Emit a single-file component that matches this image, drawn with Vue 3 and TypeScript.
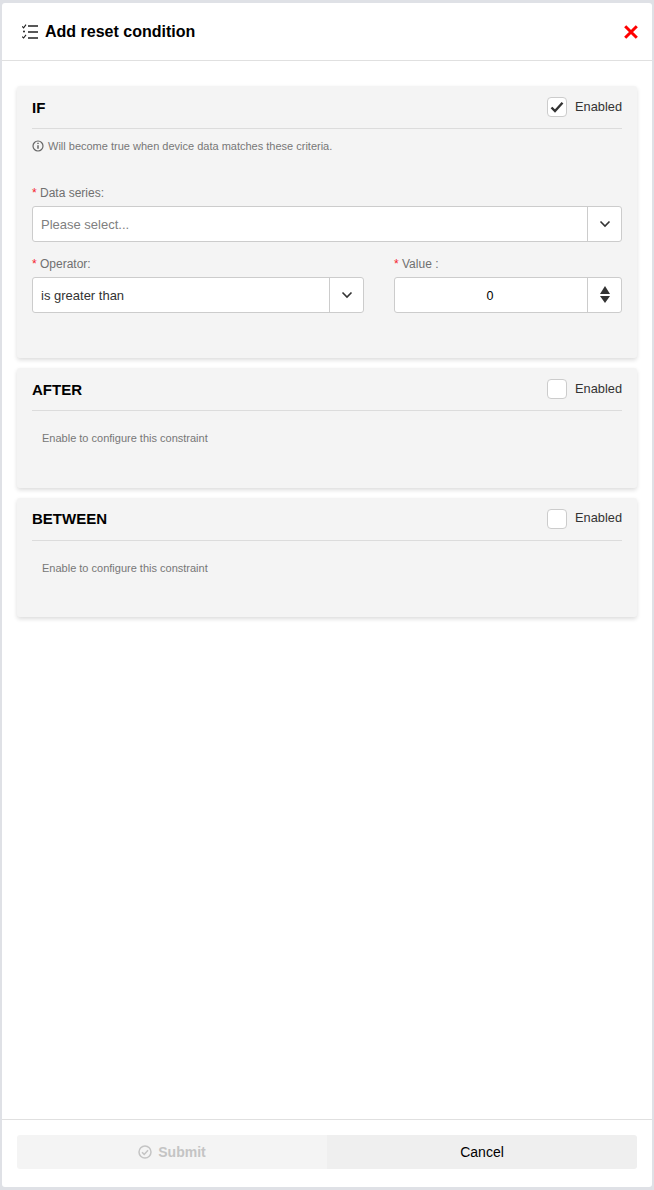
<template>
  <div class="page">
    <div class="dialog">
      <div class="dialog-header">
        <div class="dialog-title">
          <svg class="title-icon" width="18" height="16" viewBox="0 0 18 16" fill="none" stroke="#222">
            <path d="M.2 2.4 1.6 3.8 4 .6" stroke-width="1.1" />
            <path d="M.2 12.6 1.6 14 4 10.8" stroke-width="1.1" />
            <circle cx="2" cy="7.6" r="1" fill="#222" stroke="none" />
            <path d="M6 2h10M6 8h10M6 14h10" stroke-width="1.4" />
          </svg>
          <span>Add reset condition</span>
        </div>
        <svg class="close" width="14" height="14" viewBox="0 0 14 14" fill="none" stroke="#f00" stroke-width="3">
          <path d="M1.2 1.2 12.8 12.8M12.8 1.2 1.2 12.8" />
        </svg>
      </div>

      <div class="dialog-body">
        <section v-for="section in sections" :key="section.title" class="card" :class="{ open: section.enabled }">
          <div class="card-head">
            <h3>{{ section.title }}</h3>
            <label class="enabled">
              <span class="box">
                <svg v-if="section.enabled" width="14" height="12" viewBox="0 0 14 12" fill="none" stroke="#333" stroke-width="2.4">
                  <path d="M1.5 6.5 5 10 12.5 1.8" />
                </svg>
              </span>
              <span class="enabled-text">Enabled</span>
            </label>
          </div>

          <template v-if="section.enabled">
            <p class="hint">
              <svg width="12" height="12" viewBox="0 0 12 12" fill="none" stroke="#666">
                <circle cx="6" cy="6" r="5" stroke-width="1.2" />
                <path d="M6 5.2v3.6" stroke-width="1.5" />
                <path d="M6 2.8v1.3" stroke-width="1.5" />
              </svg>
              Will become true when device data matches these criteria.
            </p>

            <div class="field series">
              <div class="label"><i>*</i> Data series:</div>
              <div class="control">
                <div class="value placeholder">Please select...</div>
                <div class="addon">
                  <svg width="12" height="8" viewBox="0 0 12 8" fill="none" stroke="#333" stroke-width="1.6"><path d="M1.5 1.5 6 6l4.5-4.5" /></svg>
                </div>
              </div>
            </div>

            <div class="row">
              <div class="field operator">
                <div class="label"><i>*</i> Operator:</div>
                <div class="control">
                  <div class="value">is greater than</div>
                  <div class="addon">
                    <svg width="12" height="8" viewBox="0 0 12 8" fill="none" stroke="#333" stroke-width="1.6"><path d="M1.5 1.5 6 6l4.5-4.5" /></svg>
                  </div>
                </div>
              </div>
              <div class="field number">
                <div class="label"><i>*</i> Value :</div>
                <div class="control">
                  <div class="value centered">0</div>
                  <div class="addon spinner">
                    <svg width="12" height="20" viewBox="0 0 12 20" fill="#333"><path d="M6 1 11 9H1zM1 11h10l-5 7z" /></svg>
                  </div>
                </div>
              </div>
            </div>
          </template>

          <p v-else class="disabled-note">Enable to configure this constraint</p>
        </section>
      </div>

      <div class="dialog-footer">
        <button class="btn submit" disabled>
          <svg width="14" height="14" viewBox="0 0 14 14" fill="none" stroke="#c4c4c4" stroke-width="1.5">
            <circle cx="7" cy="7" r="6" />
            <path d="M4 7.2 6.2 9.4 10 5.2" />
          </svg>
          Submit
        </button>
        <button class="btn cancel">Cancel</button>
      </div>
    </div>
  </div>
</template>

<script setup lang="ts">
interface Section {
  title: string;
  enabled: boolean;
}

const sections: Section[] = [
  { title: 'IF', enabled: true },
  { title: 'AFTER', enabled: false },
  { title: 'BETWEEN', enabled: false },
];
</script>

<style scoped>
.page {
  box-sizing: border-box;
  height: 1190px;
  padding: 3px 2px;
  background: #dfe1e6;
  font-family: "Liberation Sans", Arial, sans-serif;
}

.dialog {
  display: flex;
  flex-direction: column;
  height: 100%;
  background: #fff;
  border-radius: 3px;
}

.dialog-header {
  box-sizing: border-box;
  display: flex;
  align-items: center;
  justify-content: space-between;
  height: 58px;
  padding: 0 14px 0 20px;
  border-bottom: 1px solid #e0e0e0;
}

.dialog-title {
  display: flex;
  align-items: center;
  gap: 5px;
  font-size: 16px;
  font-weight: 700;
  color: #000;
}

.dialog-body {
  flex: 1;
  display: flex;
  flex-direction: column;
  gap: 10px;
  padding: 25px 15px 0;
}

.card {
  box-sizing: border-box;
  height: 119.5px;
  padding: 0 15px;
  background: #f4f4f4;
  border-radius: 3px;
  box-shadow: 0 2px 4px rgba(0, 0, 0, 0.14);
}

.card.open {
  height: 272px;
}

.card-head {
  box-sizing: border-box;
  display: flex;
  align-items: center;
  justify-content: space-between;
  height: 43px;
  border-bottom: 1px solid #dcdcdc;
}

.card-head h3 {
  margin: 0;
  font-size: 15px;
  font-weight: 700;
  color: #000;
}

.enabled {
  display: flex;
  align-items: center;
  gap: 8px;
  font-size: 12.8px;
  color: #333;
}

.enabled-text {
  margin-bottom: 2px;
}

.box {
  box-sizing: border-box;
  display: flex;
  align-items: center;
  justify-content: center;
  width: 20px;
  height: 20px;
  background: #fff;
  border: 1px solid #ccc;
  border-radius: 4px;
}

.hint {
  display: flex;
  align-items: center;
  gap: 4px;
  margin: 11px 0 0;
  font-size: 11px;
  line-height: 12px;
  color: #777;
}

.disabled-note {
  margin: 21px 0 0 10px;
  font-size: 11px;
  line-height: 12px;
  color: #777;
}

.field.series {
  margin-top: 34px;
}

.label {
  height: 14px;
  margin-bottom: 6px;
  font-size: 12px;
  line-height: 14px;
  color: #707070;
}

.label i {
  font-style: normal;
  color: #f5222d;
}

.control {
  box-sizing: border-box;
  display: flex;
  height: 36px;
  background: #fff;
  border: 1px solid #ccc;
  border-radius: 3px;
}

.value {
  flex: 1;
  padding-left: 8px;
  font-size: 13px;
  line-height: 36px;
  color: #333;
}

.value.placeholder {
  color: #808080;
}

.value.centered {
  padding-left: 0;
  padding-right: 2px;
  font-size: 12.5px;
  text-align: center;
  color: #000;
}

.addon {
  box-sizing: border-box;
  display: flex;
  align-items: center;
  justify-content: center;
  width: 34px;
  border-left: 1px solid #ccc;
}

.row {
  display: flex;
  justify-content: space-between;
  margin-top: 15px;
}

.operator {
  width: 332px;
}

.number {
  width: 228px;
}

.dialog-footer {
  box-sizing: border-box;
  display: flex;
  height: 68px;
  padding: 15px 15px 0;
  border-top: 1px solid #e0e0e0;
}

.btn {
  flex: 1;
  display: flex;
  align-items: center;
  justify-content: center;
  gap: 6px;
  height: 34px;
  padding: 0;
  border: 0;
  font-family: inherit;
  font-size: 14px;
}

.submit {
  background: #f4f4f4;
  border-radius: 3px 0 0 3px;
  font-weight: 700;
  color: #c4c4c4;
}

.cancel {
  background: #efefef;
  border-radius: 0 3px 3px 0;
  color: #000;
}
</style>
